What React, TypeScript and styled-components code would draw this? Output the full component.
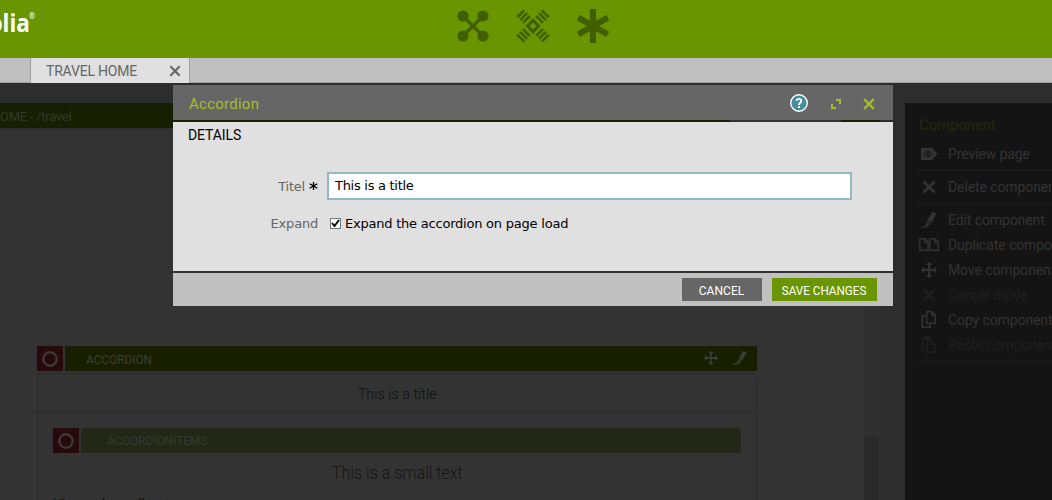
import React from "react";
import styled, { createGlobalStyle } from "styled-components";

const Global = createGlobalStyle`
  * { box-sizing: border-box; }
  body { margin: 0; overflow: hidden; font-family: Roboto, "Liberation Sans", sans-serif; }
`;

const Screen = styled.div`
  position: relative;
  width: 1052px;
  height: 500px;
  overflow: hidden;
  display: flex;
  flex-direction: column;
  background: #2d2d2d;
`;

const Text = styled.span<{
  $size: number;
  $spacing?: number;
  $weight?: number;
  $color: string;
  $condense?: number;
  $origin?: string;
}>`
  display: inline-block;
  font-size: ${(p) => p.$size}px;
  letter-spacing: ${(p) => p.$spacing ?? 0}px;
  font-weight: ${(p) => p.$weight ?? 400};
  color: ${(p) => p.$color};
  white-space: nowrap;
  transform: ${(p) => (p.$condense ? `scaleX(${p.$condense})` : "none")};
  transform-origin: ${(p) => p.$origin ?? "left"};
`;

const TopBar = styled.header`
  position: relative;
  flex: none;
  height: 58px;
  background: #699600;
  display: flex;
  justify-content: space-between;
`;

const Logo = styled.div`
  width: 35px;
  height: 40px;
  display: flex;
  justify-content: flex-end;
  font: 700 25px/44px "Open Sans", sans-serif;
  color: #fff;
  white-space: nowrap;
  transform: scaleX(0.9);
  transform-origin: right;
  sup { font-size: 8px; font-weight: 600; line-height: 32px; vertical-align: top; margin-left: -1px; }
`;

const Launchers = styled.nav`
  display: flex;
  gap: 26px;
  padding: 9px 442px 0 0;
  color: #415f00;
`;

const TabBar = styled.div`
  flex: none;
  height: 25px;
  background: #c0c0c0;
  border-bottom: 1px solid #a0a0a0;
  padding-left: 30px;
`;

const Tab = styled.div`
  width: 160px;
  height: 25px;
  padding: 0 8px 0 15px;
  display: flex;
  align-items: center;
  justify-content: space-between;
  background: #e0e0e0;
  border-left: 1px solid #a0a0a0;
  border-right: 1px solid #a0a0a0;
  color: #666;
`;

const Workspace = styled.main`
  flex: 1;
  display: flex;
  padding-top: 20px;
  min-height: 0;
`;

const Page = styled.section`
  width: 880px;
  display: flex;
  flex-direction: column;
  background: #333;
`;

const PageBar = styled.div`
  flex: none;
  height: 25px;
  display: flex;
  background: linear-gradient(90deg, #171f00 730px, #333 730px, #333 841px, #171f00 841px);
  line-height: 28px;
`;

const PageBody = styled.div`
  flex: 1;
  display: flex;
  justify-content: space-between;
  padding-left: 37px;
  border-top: 3px solid #303030;
`;

const Track = styled.div`
  width: 16px;
  background: #303030;
  padding-top: 305px;
`;

const Thumb = styled.div`
  width: 15px;
  height: 64px;
  background: #292929;
`;

const Area = styled.div`
  width: 720px;
  padding-top: 215px;
`;

const AreaBar = styled.div`
  height: 25px;
  display: flex;
  gap: 2px;
  color: #3b3e36;
`;

const Marker = styled.div`
  width: 26px;
  height: 25px;
  background: #260a0c;
  display: flex;
  align-items: center;
  justify-content: center;
  padding-top: 1px;
  color: #3c393a;
`;

const Strip = styled.div<{ $inner?: boolean }>`
  flex: 1;
  display: flex;
  align-items: center;
  padding: ${(p) => (p.$inner ? "0 9px 0 26px" : "2px 9px 0 21px")};
  background: ${(p) => (p.$inner ? "#222815" : "#171f00")};
  border-radius: ${(p) => (p.$inner ? "5px 5px 0 0" : "0")};
`;

const Actions = styled.div`
  margin: -3px 0 0 auto;
  display: flex;
  align-items: center;
  gap: 13px;
`;

const Card = styled.div`
  margin-top: 2px;
  height: 140px;
  border: 1px solid #292929;
  border-radius: 5px 5px 0 0;
`;

const CardTitle = styled.div`
  height: 39px;
  border-bottom: 1px solid #292929;
  text-align: center;
  line-height: 39px;
`;

const CardBody = styled.div`
  padding: 15px 15px 0;
`;

const Small = styled.div`
  height: 40px;
  line-height: 39px;
  text-align: center;
`;

const Side = styled.aside`
  margin-left: 25px;
  width: 147px;
  background: #141414;
  padding: 10px 0 0 10px;
  overflow: hidden;
`;

const SideTitle = styled.div`
  padding-left: 4px;
  height: 25px;
  line-height: 23px;
`;

const SideList = styled.div`
  padding-top: 3px;
`;

const CommandGroup = styled.div`
  padding-bottom: 4px;
  border-bottom: 1px solid #1c1c1c;
  margin-bottom: 3px;
`;

const Command = styled.div<{ $off?: boolean }>`
  height: 25px;
  padding-left: 3px;
  display: flex;
  align-items: center;
  gap: 8px;
  color: ${(p) => (p.$off ? "#1f1f1f" : "#333")};
`;

const IconSlot = styled.div`
  flex: none;
  width: 22px;
  display: flex;
  justify-content: center;
`;

const Dialog = styled.section`
  position: absolute;
  left: 173px;
  top: 85px;
  width: 720px;
  height: 221px;
  display: flex;
  flex-direction: column;
  gap: 2px;
`;

const DialogHead = styled.div`
  height: 35px;
  padding: 2px 18px 0 16px;
  display: flex;
  align-items: center;
  background: #666;
  color: #a7be29;
`;

const HeadTools = styled.div`
  margin-left: auto;
  display: flex;
  align-items: center;
  gap: 22px;
  svg:first-child { margin: -1px 1px 0 0; }
`;

const DialogBody = styled.div`
  flex: 1;
  background: #e0e0e0;
`;

const Details = styled.div`
  height: 50px;
  padding: 3px 0 0 15px;
`;

const Field = styled.div`
  display: flex;
  align-items: center;
  height: 28px;
  margin-bottom: 9px;
  font-family: "DejaVu Sans", sans-serif;
`;

const Label = styled.div`
  width: 145px;
  margin-right: 9px;
  display: flex;
  align-items: center;
  justify-content: flex-end;
  gap: 4px;
`;

const Input = styled.div`
  width: 525px;
  height: 28px;
  border: 2px solid #93b9c2;
  background: #fff;
  padding-left: 6px;
  line-height: 22px;
`;

const Check = styled.div`
  width: 11px;
  height: 11px;
  border: 1px solid #777;
  background: #fff;
  margin: 1px 4px 0 3px;
  svg { display: block; }
`;

const DialogFoot = styled.div`
  height: 33px;
  background: #c0c0c0;
  display: flex;
  justify-content: flex-end;
  gap: 10px;
  padding: 5px 16px 0 0;
`;

const Button = styled.button<{ $primary?: boolean }>`
  width: ${(p) => (p.$primary ? 105 : 80)}px;
  height: 23px;
  border: 0;
  padding: 2px 0 0;
  background: ${(p) => (p.$primary ? "#699600" : "#666")};
  font-family: inherit;
`;

const Cross = ({ size = 18, arm = 5, w = 2.4 }: { size?: number; arm?: number; w?: number }) => (
  <svg width={size} height={size} viewBox="-9 -9 18 18" stroke="currentColor" strokeWidth={w}>
    <path d={`M${-arm} ${-arm}L${arm} ${arm}M${arm} ${-arm}L${-arm} ${arm}`} />
  </svg>
);

const Move = ({ size = 18 }: { size?: number }) => (
  <svg width={size} height={size} viewBox="-9 -9 18 18" fill="currentColor">
    <path d="M-1-5H-3.5L0-8 3.5-5H1V-1H5V-3.5L8 0 5 3.5V1H1V5H3.5L0 8-3.5 5H-1V1H-5V3.5L-8 0-5-3.5V-1H-1Z" />
  </svg>
);

const Pencil = ({ size = 18 }: { size?: number }) => (
  <svg width={size} height={size} viewBox="0 0 18 18" fill="currentColor">
    <path d="M12.5 1L16.5 2.6 11.4 12 7.2 9.6ZM6.7 10.5L10.6 12.8 7 16 5.6 15.2Z" />
    <path d="M1 15.5Q4 14.5 6.5 15.5V16.5H1Z" />
  </svg>
);

const Preview = () => (
  <svg width="18" height="18" viewBox="0 0 18 18">
    <path d="M1 3H12L17.5 9 12 15H1Z" fill="currentColor" />
    <path d="M3.5 9Q8 3.5 12.5 9Q8 14.5 3.5 9Z" fill="none" stroke="#141414" />
    <circle cx="8" cy="9" r="1.4" fill="none" stroke="#141414" />
  </svg>
);

const Duplicate = () => (
  <svg width="22" height="18" viewBox="0 0 22 18" fill="none" stroke="currentColor" strokeWidth="1.5">
    <path d="M1.8 2.7H7L10 6V14.3H1.8ZM11.8 2.7H17L20.2 6V14.3H11.8ZM6.8 3V6.5H10M16.8 3V6.5H20" />
  </svg>
);

const Copy = () => (
  <svg width="18" height="18" viewBox="0 0 18 18" fill="none" stroke="currentColor" strokeWidth="1.5">
    <path d="M6.8 0.8H12L15.2 4V12.2H6.8ZM11.8 1V4.3H15M6 4.8H2.3V16.2H10.2V13" />
  </svg>
);

const Paste = () => (
  <svg width="18" height="18" viewBox="0 0 18 18" fill="none" stroke="currentColor" strokeWidth="1.5">
    <path d="M7 14.2H2.3V2.3H11.2V4.5M5 2.3V1H9V3.5H5M7.3 5.8H12L15.2 8.5V16.2H7.3ZM12 6V9H15" />
  </svg>
);

const Ring = () => (
  <svg width="18" height="18" viewBox="-9 -9 18 18">
    <circle r="6.7" fill="none" stroke="currentColor" strokeWidth="2.4" />
  </svg>
);

const Nodes = () => (
  <svg width="34" height="34" viewBox="-17 -17 34 34" fill="currentColor">
    <path d="M-10-10L10 10M10-10L-10 10" stroke="currentColor" strokeWidth="3.2" />
    {[-10, 10].map((x) => [-10, 10].map((y) => <circle key={`${x}${y}`} cx={x} cy={y} r="5.6" />))}
  </svg>
);

const Pulse = () => (
  <svg width="34" height="34" viewBox="-17 -17 34 34" fill="none" stroke="currentColor" strokeWidth="2.6">
    <rect x="-3.9" y="-3.9" width="7.8" height="7.8" transform="rotate(45)" strokeWidth="3" />
    {[0, 90, 180, 270].map((a) => (
      <path key={a} transform={`rotate(${a + 45})`} d="M-4.9 -9.3H4.9M-4.9 -13.3H4.9M-4.9 -17.3H4.9" />
    ))}
  </svg>
);

const Star = () => (
  <svg width="34" height="34" viewBox="-17 -17 34 34" stroke="currentColor" strokeWidth="6.2">
    <path d="M0-17V17M-14.8-8.4L14.8 8.4M14.8-8.4L-14.8 8.4" />
  </svg>
);

const Help = () => (
  <svg width="18" height="18" viewBox="0 0 18 18">
    <circle cx="9" cy="9" r="8.3" fill="#458d9f" stroke="#fff" strokeWidth="1.4" />
    <path d="M6.6 7.1C6.6 4 11.4 4.2 11.2 7.1C11.1 8.7 9 8.8 9 11" fill="none" stroke="#fff" strokeWidth="1.9" />
    <rect x="8" y="12" width="2" height="2" fill="#fff" />
  </svg>
);

const Expand = () => (
  <svg width="10" height="10" viewBox="0 0 10 10" fill="none" stroke="currentColor" strokeWidth="2">
    <path d="M5 1H9V5M1 5V9H5" />
  </svg>
);

const Asterisk = () => (
  <svg width="9" height="10" viewBox="-5 -5 10 10" stroke="#000" strokeWidth="1.5">
    <path d="M0-4.5V4.5M-4.3-2.5L4.3 2.5M4.3-2.5L-4.3 2.5" />
  </svg>
);

type Item = { label: string; icon: React.ReactNode; off?: boolean };

const groups: Item[][] = [
  [{ label: "Preview page", icon: <Preview /> }],
  [{ label: "Delete component", icon: <Cross arm={5.5} w={2.7} /> }],
  [
    { label: "Edit component", icon: <Pencil /> },
    { label: "Duplicate component", icon: <Duplicate /> },
    { label: "Move component", icon: <Move /> },
    { label: "Cancel move", icon: <Cross arm={5.5} w={2.7} />, off: true },
    { label: "Copy component", icon: <Copy /> },
    { label: "Paste component", icon: <Paste />, off: true },
  ],
];

export default function App() {
  return (
    <Screen>
      <Global />
      <TopBar>
        <Logo>olia<sup>®</sup></Logo>
        <Launchers><Nodes /><Pulse /><Star /></Launchers>
      </TopBar>
      <TabBar>
        <Tab>
          <Text $size={14} $spacing={-0.2} $color="#666">TRAVEL HOME</Text>
          <Cross size={12} arm={7} w={3.3} />
        </Tab>
      </TabBar>
      <Workspace>
        <Page>
          <PageBar><Text $size={13} $spacing={-0.25} $color="#34382a">OME - /travel</Text></PageBar>
          <PageBody>
            <Area>
              <AreaBar>
                <Marker><Ring /></Marker>
                <Strip>
                  <Text $size={13} $condense={0.91} $color="#3c402f">ACCORDION</Text>
                  <Actions><Move size={16} /><Pencil size={16} /></Actions>
                </Strip>
              </AreaBar>
              <Card>
                <CardTitle><Text $size={15} $condense={0.96} $origin="center" $color="#0f0f0f" $weight={300}>This is a title</Text></CardTitle>
                <CardBody>
                  <AreaBar>
                    <Marker><Ring /></Marker>
                    <Strip $inner><Text $size={13} $condense={0.91} $color="#373b2f">ACCORDIONITEMS</Text></Strip>
                  </AreaBar>
                  <Small><Text $size={19} $condense={0.845} $origin="center" $weight={300} $color="#151515">This is a small text</Text></Small>
                  <Text $size={13} $weight={700} $spacing={-0.3} $color="#151515">Ninas only small text</Text>
                </CardBody>
              </Card>
            </Area>
            <Track><Thumb /></Track>
          </PageBody>
        </Page>
        <Side>
          <SideTitle><Text $size={15} $spacing={-0.15} $weight={500} $color="#20260b">Component</Text></SideTitle>
          <SideList>
            {groups.map((g) => (
              <CommandGroup key={g[0].label}>
                {g.map((c) => (
                  <Command key={c.label} $off={c.off}>
                    <IconSlot>{c.icon}</IconSlot>
                    <Text $size={14} $spacing={-0.1} $color="currentColor">{c.label}</Text>
                  </Command>
                ))}
              </CommandGroup>
            ))}
          </SideList>
        </Side>
      </Workspace>
      <Dialog>
        <DialogHead>
          <Text $size={15} $spacing={0.25} $color="#a7be29">Accordion</Text>
          <HeadTools><Help /><Expand /><Cross size={12} arm={7.3} w={3.3} /></HeadTools>
        </DialogHead>
        <DialogBody>
          <Details><Text $size={14} $spacing={-0.1} $color="#000">DETAILS</Text></Details>
          <Field>
            <Label>
              <Text $size={13} $spacing={-0.2} $color="#666">Titel</Text>
              <Asterisk />
            </Label>
            <Input><Text $size={13} $spacing={-0.28} $color="#000">This is a title</Text></Input>
          </Field>
          <Field>
            <Label><Text $size={13} $spacing={-0.2} $color="#666">Expand</Text></Label>
            <Check><svg width="9" height="9" viewBox="0 0 9 9" fill="none" stroke="#000" strokeWidth="1.9"><path d="M1 4L3.5 7 8 1" /></svg></Check>
            <Text $size={13} $spacing={-0.22} $color="#000">Expand the accordion on page load</Text>
          </Field>
        </DialogBody>
        <DialogFoot>
          <Button><Text $size={13} $condense={0.93} $origin="center" $color="#fff">CANCEL</Text></Button>
          <Button $primary><Text $size={13} $condense={0.9} $origin="center" $color="#fff">SAVE CHANGES</Text></Button>
        </DialogFoot>
      </Dialog>
    </Screen>
  );
}
